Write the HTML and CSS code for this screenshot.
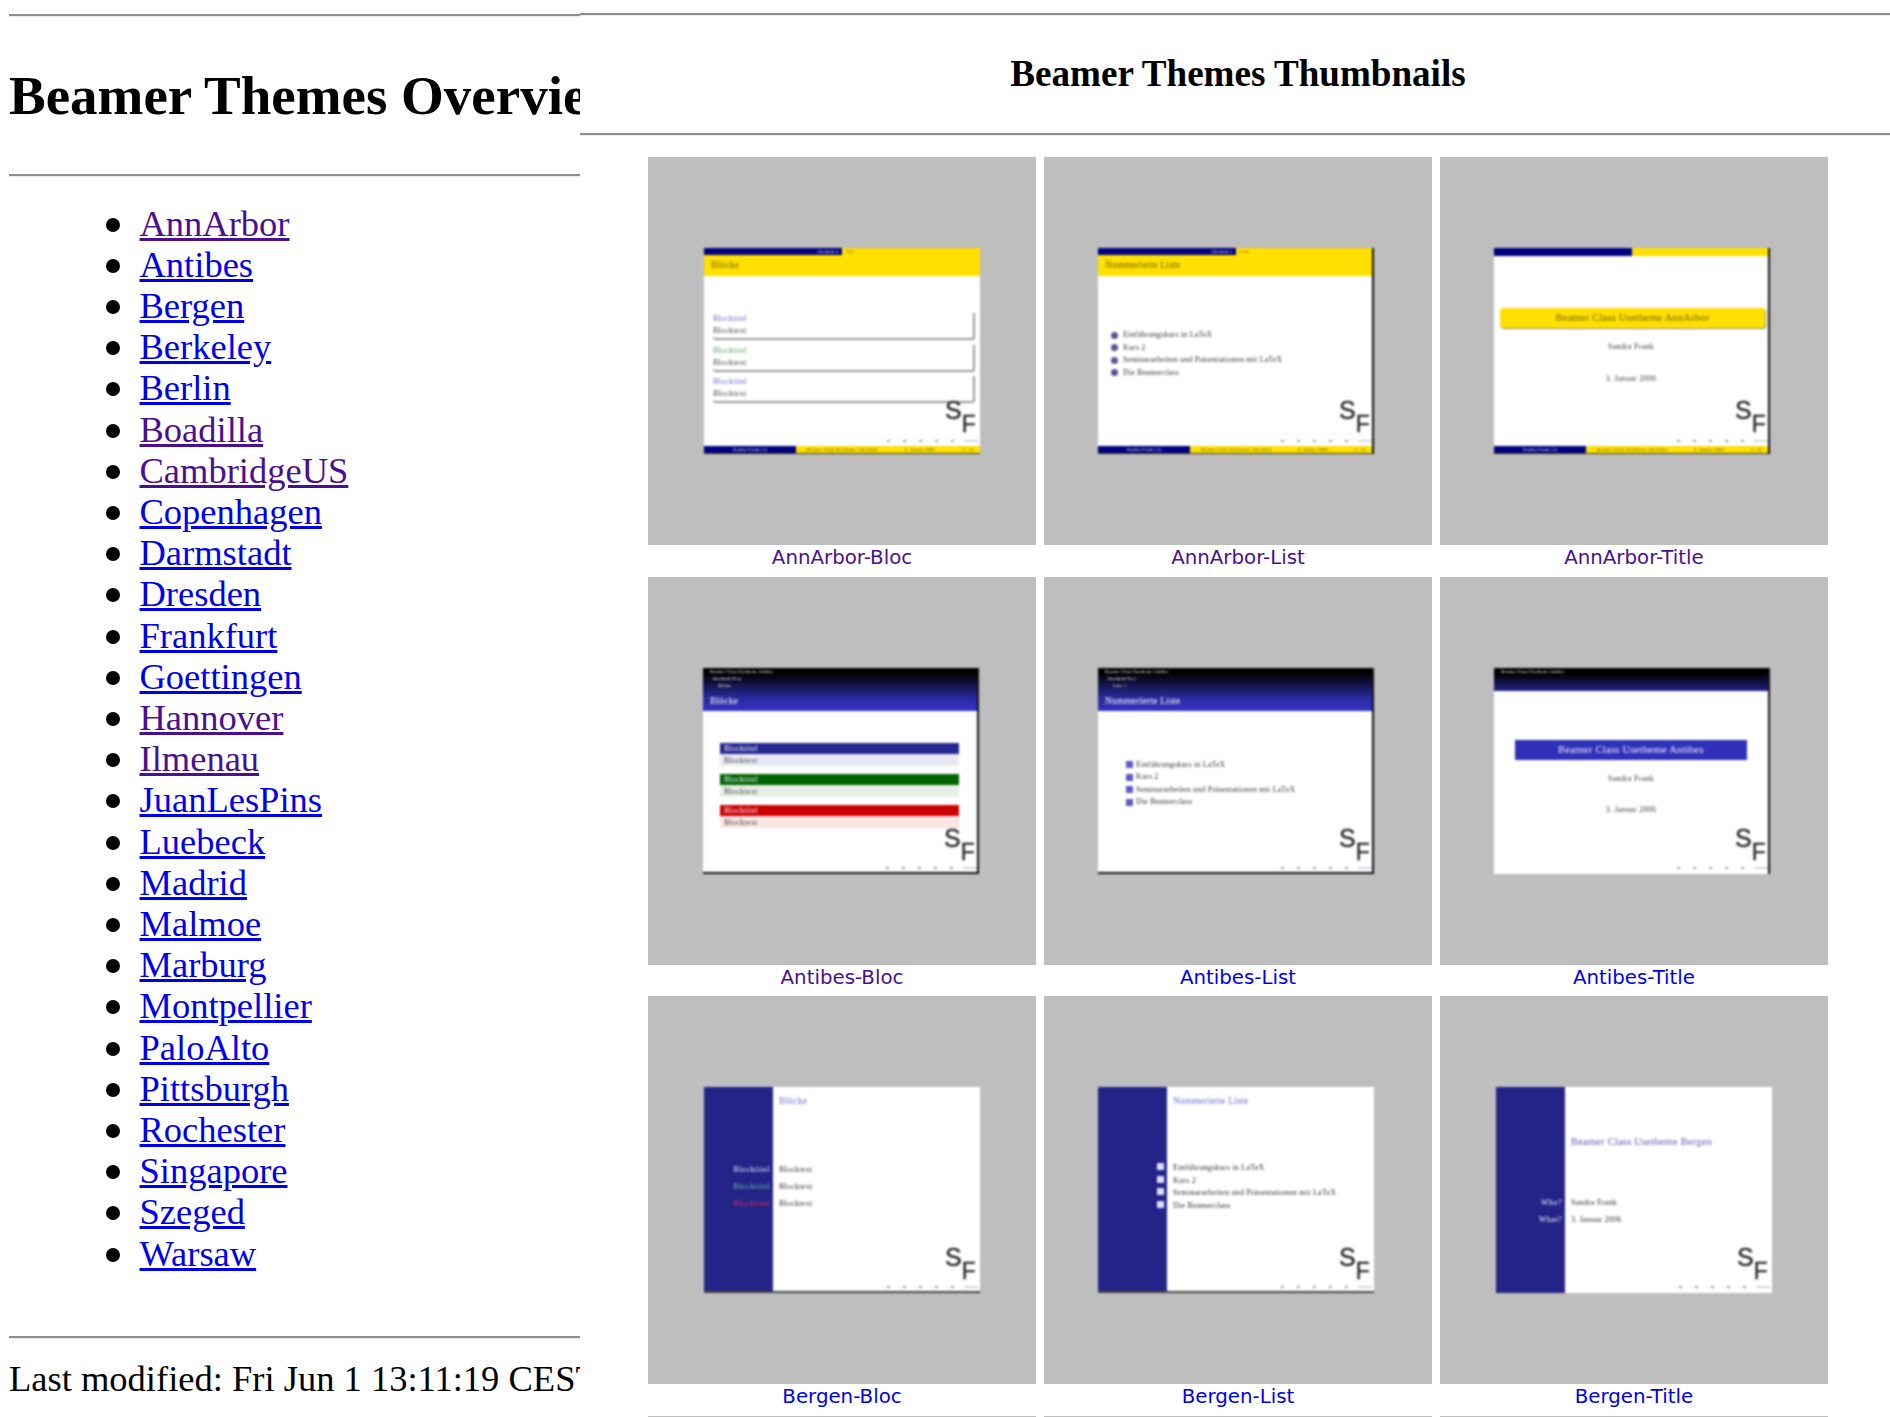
FILE: index.html
```html
<!DOCTYPE html>
<html lang="en">
<head>
    <meta charset="UTF-8">
    <title>Beamer Themes Overview</title>
    <link rel="stylesheet" href="styles.css">
</head>
<body>
    <div class="frames">
        <div class="toc">
            <hr class="rule first-rule">
            <h1>Beamer Themes Overview</h1>
            <hr class="rule">
            <ul class="theme-list">
                <li><a class="seen" href="#">AnnArbor</a></li>
                <li><a href="#">Antibes</a></li>
                <li><a href="#">Bergen</a></li>
                <li><a href="#">Berkeley</a></li>
                <li><a href="#">Berlin</a></li>
                <li><a class="seen" href="#">Boadilla</a></li>
                <li><a class="seen" href="#">CambridgeUS</a></li>
                <li><a href="#">Copenhagen</a></li>
                <li><a href="#">Darmstadt</a></li>
                <li><a href="#">Dresden</a></li>
                <li><a href="#">Frankfurt</a></li>
                <li><a href="#">Goettingen</a></li>
                <li><a class="seen" href="#">Hannover</a></li>
                <li><a class="seen" href="#">Ilmenau</a></li>
                <li><a href="#">JuanLesPins</a></li>
                <li><a href="#">Luebeck</a></li>
                <li><a href="#">Madrid</a></li>
                <li><a href="#">Malmoe</a></li>
                <li><a href="#">Marburg</a></li>
                <li><a href="#">Montpellier</a></li>
                <li><a href="#">PaloAlto</a></li>
                <li><a href="#">Pittsburgh</a></li>
                <li><a href="#">Rochester</a></li>
                <li><a href="#">Singapore</a></li>
                <li><a href="#">Szeged</a></li>
                <li><a href="#">Warsaw</a></li>
            </ul>
            <hr class="rule last-rule">
            <p class="modified">Last modified: Fri Jun 1 13:11:19 CEST 2007</p>
        </div>

        <div class="thumbs">
            <hr class="rule top-rule">
            <h2>Beamer Themes Thumbnails</h2>
            <hr class="rule">
            <div class="grid">

                <!-- AnnArbor -->
                <div class="cell">
                    <div class="shot">
                        <div class="slide">
                            <div class="aa-top">
                                <div class="aa-top-left">Abschnitt 4</div>
                                <div class="aa-top-right">Titel</div>
                            </div>
                            <div class="aa-head">Blöcke</div>
                            <div class="aa-blocks">
                                <div class="aa-block"><div class="tint-blue">Blocktitel</div><div>Blocktext</div></div>
                                <div class="aa-block"><div class="tint-green">Blocktitel</div><div>Blocktext</div></div>
                                <div class="aa-block"><div class="tint-blue">Blocktitel</div><div>Blocktext</div></div>
                            </div>
                            <div class="aa-foot">
                                <div class="aa-foot-left">Sandra Frank (1)</div>
                                <div class="aa-foot-right"><span>Beamer Class Usetheme AnnArbor</span><span>3. Januar 2006</span><span>2 / 12</span></div>
                            </div>
                            <div class="logo">S<span class="logo-f">F</span></div>
                            <div class="nav"><i></i><i></i><i></i><i></i><i></i><b></b></div>
                        </div>
                    </div>
                    <a class="caption seen" href="#">AnnArbor-Bloc</a>
                </div>

                <div class="cell">
                    <div class="shot">
                        <div class="slide slide-shift edge-right">
                            <div class="aa-top">
                                <div class="aa-top-left">Abschnitt 3</div>
                                <div class="aa-top-right">Liste</div>
                            </div>
                            <div class="aa-head">Nummerierte Liste</div>
                            <ul class="items items-aa">
                                <li><span class="ball"></span>Einführungskurs in LaTeX</li>
                                <li><span class="ball"></span>Kurs 2</li>
                                <li><span class="ball"></span>Seminararbeiten und Präsentationen mit LaTeX</li>
                                <li><span class="ball"></span>Die Beamerclass</li>
                            </ul>
                            <div class="aa-foot">
                                <div class="aa-foot-left">Sandra Frank (1)</div>
                                <div class="aa-foot-right"><span>Beamer Class Usetheme AnnArbor</span><span>3. Januar 2006</span><span>3 / 12</span></div>
                            </div>
                            <div class="logo">S<span class="logo-f">F</span></div>
                            <div class="nav"><i></i><i></i><i></i><i></i><i></i><b></b></div>
                        </div>
                    </div>
                    <a class="caption seen" href="#">AnnArbor-List</a>
                </div>

                <div class="cell">
                    <div class="shot">
                        <div class="slide slide-shift edge-right">
                            <div class="aa-top aa-top-plain">
                                <div class="aa-top-left"></div>
                                <div class="aa-top-right"></div>
                            </div>
                            <div class="title-page title-aa">
                                <div class="title-box title-box-aa">Beamer Class Usetheme AnnArbor</div>
                                <div class="title-line">Sandra Frank</div>
                                <div class="title-line title-date">3. Januar 2006</div>
                            </div>
                            <div class="aa-foot">
                                <div class="aa-foot-left">Sandra Frank (1)</div>
                                <div class="aa-foot-right"><span>Beamer Class Usetheme AnnArbor</span><span>3. Januar 2006</span><span>1 / 12</span></div>
                            </div>
                            <div class="logo">S<span class="logo-f">F</span></div>
                            <div class="nav"><i></i><i></i><i></i><i></i><i></i><b></b></div>
                        </div>
                    </div>
                    <a class="caption seen" href="#">AnnArbor-Title</a>
                </div>

                <!-- Antibes -->
                <div class="cell">
                    <div class="shot">
                        <div class="slide slide-nudge edge-right edge-bottom">
                            <div class="an-head">
                                <div class="an-crumb">Beamer Class Usetheme Antibes</div>
                                <div class="an-crumb an-crumb-2">Abschnitt Nr.4</div>
                                <div class="an-crumb an-crumb-3">Blöcke</div>
                                <div class="an-title">Blöcke</div>
                            </div>
                            <div class="an-blocks">
                                <div class="an-block"><div class="an-bar bar-blue">Blocktitel</div><div class="an-body body-blue">Blocktext</div></div>
                                <div class="an-block"><div class="an-bar bar-green">Blocktitel</div><div class="an-body body-green">Blocktext</div></div>
                                <div class="an-block"><div class="an-bar bar-red">Blocktitel</div><div class="an-body body-red">Blocktext</div></div>
                            </div>
                            <div class="logo logo-low">S<span class="logo-f">F</span></div>
                            <div class="nav nav-low"><i></i><i></i><i></i><i></i><i></i><b></b></div>
                        </div>
                    </div>
                    <a class="caption seen" href="#">Antibes-Bloc</a>
                </div>

                <div class="cell">
                    <div class="shot">
                        <div class="slide slide-shift edge-right edge-bottom">
                            <div class="an-head">
                                <div class="an-crumb">Beamer Class Usetheme Antibes</div>
                                <div class="an-crumb an-crumb-2">Abschnitt Nr.3</div>
                                <div class="an-crumb an-crumb-3">Liste 1</div>
                                <div class="an-title">Nummerierte Liste</div>
                            </div>
                            <ul class="items items-an">
                                <li><span class="square"></span>Einführungskurs in LaTeX</li>
                                <li><span class="square"></span>Kurs 2</li>
                                <li><span class="square"></span>Seminararbeiten und Präsentationen mit LaTeX</li>
                                <li><span class="square"></span>Die Beamerclass</li>
                            </ul>
                            <div class="logo logo-low">S<span class="logo-f">F</span></div>
                            <div class="nav nav-low"><i></i><i></i><i></i><i></i><i></i><b></b></div>
                        </div>
                    </div>
                    <a class="caption" href="#">Antibes-List</a>
                </div>

                <div class="cell">
                    <div class="shot">
                        <div class="slide slide-shift edge-right">
                            <div class="an-head an-head-short">
                                <div class="an-crumb">Beamer Class Usetheme Antibes</div>
                            </div>
                            <div class="title-page title-an">
                                <div class="title-box title-box-an">Beamer Class Usetheme Antibes</div>
                                <div class="title-line">Sandra Frank</div>
                                <div class="title-line title-date">3. Januar 2006</div>
                            </div>
                            <div class="logo logo-low">S<span class="logo-f">F</span></div>
                            <div class="nav nav-low"><i></i><i></i><i></i><i></i><i></i><b></b></div>
                        </div>
                    </div>
                    <a class="caption" href="#">Antibes-Title</a>
                </div>

                <!-- Bergen -->
                <div class="cell">
                    <div class="shot">
                        <div class="slide slide-side edge-bottom-soft">
                            <div class="side"></div>
                            <div class="side-main">
                                <div class="side-head">Blöcke</div>
                                <div class="side-rows side-rows-bloc">
                                    <div class="side-row"><span class="side-label">Blocktitel</span><span>Blocktext</span></div>
                                    <div class="side-row"><span class="side-label label-teal">Blocktitel</span><span>Blocktext</span></div>
                                    <div class="side-row"><span class="side-label label-red">Blocktitel</span><span>Blocktext</span></div>
                                </div>
                            </div>
                            <div class="logo logo-low">S<span class="logo-f">F</span></div>
                            <div class="nav nav-low"><i></i><i></i><i></i><i></i><i></i><b></b></div>
                        </div>
                    </div>
                    <a class="caption" href="#">Bergen-Bloc</a>
                </div>

                <div class="cell">
                    <div class="shot">
                        <div class="slide slide-shift slide-side edge-bottom-soft">
                            <div class="side"></div>
                            <div class="side-main">
                                <div class="side-head">Nummerierte Liste</div>
                                <div class="side-rows side-rows-list">
                                    <div class="side-row"><span class="side-label"><span class="side-num"></span></span><span>Einführungskurs in LaTeX</span></div>
                                    <div class="side-row"><span class="side-label"><span class="side-num"></span></span><span>Kurs 2</span></div>
                                    <div class="side-row"><span class="side-label"><span class="side-num"></span></span><span>Seminararbeiten und Präsentationen mit LaTeX</span></div>
                                    <div class="side-row"><span class="side-label"><span class="side-num"></span></span><span>Die Beamerclass</span></div>
                                </div>
                            </div>
                            <div class="logo logo-low">S<span class="logo-f">F</span></div>
                            <div class="nav nav-low"><i></i><i></i><i></i><i></i><i></i><b></b></div>
                        </div>
                    </div>
                    <a class="caption" href="#">Bergen-List</a>
                </div>

                <div class="cell">
                    <div class="shot">
                        <div class="slide slide-side">
                            <div class="side"></div>
                            <div class="side-main">
                                <div class="side-title">Beamer Class Usetheme Bergen</div>
                                <div class="side-rows side-rows-title">
                                    <div class="side-row"><span class="side-label">Who?</span><span>Sandra Frank</span></div>
                                    <div class="side-row"><span class="side-label">What?</span><span>3. Januar 2006</span></div>
                                </div>
                            </div>
                            <div class="logo logo-low">S<span class="logo-f">F</span></div>
                            <div class="nav nav-low"><i></i><i></i><i></i><i></i><i></i><b></b></div>
                        </div>
                    </div>
                    <a class="caption" href="#">Bergen-Title</a>
                </div>

                <!-- next row, only its top edge is on screen -->
                <div class="cell"><div class="shot"></div></div>
                <div class="cell"><div class="shot"></div></div>
                <div class="cell"><div class="shot"></div></div>
            </div>
        </div>
    </div>
</body>
</html>
```

FILE: styles.css
```css
html, body {
    margin: 0;
    height: 100%;
    overflow: hidden;
    background: white;
}
.frames {
    display: flex;
    height: 1417px;
    overflow: hidden;
    font-family: "Liberation Serif", serif;
    color: black;
}
.rule {
    margin: 0;
    border: 0;
    border-top: 2px solid #8e8e8e;
    border-bottom: 1px solid #ececec;
}

/* left frame */
.toc {
    width: 571px;
    padding-left: 9px;
    flex: none;
    overflow: hidden;
    white-space: nowrap;
}
.first-rule {
    margin-top: 14px;
}
h1 {
    margin: 0;
    padding: 48px 0 47px;
    font-size: 55px;
    line-height: 62px;
}
.theme-list {
    margin: 0;
    padding: 25.5px 0 0 130.5px;
    list-style: none;
    font-size: 36.5px;
    line-height: 41.2px;
}
.theme-list li::before {
    content: "";
    display: inline-block;
    width: 14px;
    height: 14px;
    margin: 0 19.5px 0 -33.5px;
    border-radius: 50%;
    background: black;
    vertical-align: 4px;
}
a {
    color: #0000f0;
}
a.seen {
    color: #4a1090;
}
.last-rule {
    margin-top: 62.5px;
}
.modified {
    margin: 0;
    padding-top: 19px;
    font-size: 36.5px;
    line-height: 41px;
}

/* right frame */
.thumbs {
    flex: 1;
    min-width: 0;
}
.top-rule {
    margin-top: 13px;
}
h2 {
    margin: 0;
    padding: 32px 0 33px 6px;
    font-size: 37.1px;
    line-height: 52px;
    text-align: center;
}
.grid {
    display: grid;
    grid-template-columns: repeat(3, 388px);
    gap: 0 8px;
    padding: 21px 0 0 68px;
}
.cell {
    height: 420px;
    text-align: center;
}
.cell:nth-child(n+4):nth-child(-n+6) {
    height: 419px;
}
.shot {
    height: 388px;
    background: #bebebe;
    display: flex;
    justify-content: center;
    align-items: center;
}
.caption {
    display: block;
    font-family: "DejaVu Sans", sans-serif;
    font-size: 19.8px;
    line-height: 26px;
    text-decoration: none;
}

/* one slide thumbnail */
.slide {
    position: relative;
    width: 276px;
    height: 206px;
    flex: none;
    box-sizing: border-box;
    display: flex;
    flex-direction: column;
    overflow: hidden;
    background: white;
    color: #333;
    font-size: 8px;
    line-height: 10px;
    letter-spacing: .25px;
    text-align: left;
    filter: blur(.85px);
}
.slide-shift {
    margin-left: -4px;
}
.slide-nudge {
    margin-left: -2px;
}
.edge-right {
    border-right: 2px solid #111;
}
.edge-bottom {
    border-bottom: 2px solid #111;
}
.edge-bottom-soft {
    border-bottom: 2px solid #444;
}
.logo {
    position: absolute;
    left: 241px;
    top: 150px;
    font-family: "Liberation Sans", sans-serif;
    font-size: 25px;
    line-height: 25px;
    letter-spacing: 0;
    color: #222;
    -webkit-text-stroke: .3px #222;
}
.logo-f {
    font-size: 23px;
    vertical-align: -13px;
}
.logo-low {
    top: 158px;
}
.nav {
    position: absolute;
    left: 183px;
    top: 192px;
    display: flex;
    align-items: center;
    gap: 13px;
}
.nav-low {
    top: 199px;
}
.nav i {
    width: 3px;
    height: 2px;
    background: #a0a0a0;
}
.nav b {
    width: 14px;
    height: 2px;
    margin-left: -3px;
    background: #d6d6e0;
}

/* AnnArbor */
.aa-top {
    display: flex;
    height: 7px;
    font-size: 4px;
    line-height: 7px;
    flex: none;
}
.aa-top-left {
    width: 138px;
    padding-right: 4px;
    box-sizing: border-box;
    background: #000080;
    color: white;
    text-align: right;
}
.aa-top-right {
    flex: 1;
    padding-left: 4px;
    background: #ffe000;
    color: #5b5000;
}
.aa-top-plain {
    height: 8px;
}
.aa-head {
    height: 21px;
    flex: none;
    padding: 0 7px;
    box-sizing: border-box;
    background: #ffe000;
    color: #6d6300;
    font-size: 9.4px;
    line-height: 20px;
}
.aa-blocks {
    flex: 1;
    padding: 37px 5px 0 9px;
    display: flex;
    flex-direction: column;
    gap: 4.5px;
}
.aa-block {
    height: 25px;
    border-right: 2px solid #999;
    border-bottom: 2px solid #999;
    border-radius: 0 0 3px 3px;
    line-height: 12px;
    color: #444;
}
.tint-blue {
    color: #6a6ac8;
}
.tint-green {
    color: #5f9e5f;
}
.aa-foot {
    display: flex;
    height: 8px;
    flex: none;
    font-size: 4.5px;
    line-height: 8px;
    border-bottom: 1px solid #3a3a20;
    box-sizing: border-box;
}
.aa-foot-left {
    width: 92px;
    flex: none;
    background: #000080;
    color: white;
    text-align: center;
}
.aa-foot-right {
    flex: 1;
    display: flex;
    justify-content: space-between;
    padding: 0 6px 0 11px;
    background: #ffe000;
    color: #4b4000;
}
.items {
    flex: 1;
    margin: 0;
    list-style: none;
    display: flex;
    flex-direction: column;
    justify-content: center;
    font-size: 7.8px;
    line-height: 12.5px;
    color: #333;
}
.items li {
    display: flex;
    align-items: center;
}
.items-aa {
    padding: 0 0 14px 13px;
}
.items-an {
    padding: 0 0 16px 28px;
}
.ball {
    width: 7px;
    height: 7px;
    margin-right: 5px;
    border-radius: 50%;
    background: #55558f;
}
.square {
    width: 7px;
    height: 7px;
    margin-right: 3px;
    background: #5a5ac0;
}

/* title pages */
.title-page {
    flex: 1;
    display: flex;
    flex-direction: column;
    align-items: center;
    font-size: 8px;
    color: #444;
}
.title-box {
    height: 20px;
    line-height: 20px;
    text-align: center;
    box-sizing: border-box;
}
.title-aa {
    padding-top: 52px;
}
.title-box-aa {
    width: 265px;
    margin-left: 3px;
    background: #ffe000;
    color: #6d6300;
    font-size: 10.4px;
    border-radius: 3px;
    box-shadow: 1px 1px 1px #8c8c60;
}
.title-line {
    margin-top: 14px;
    line-height: 10px;
}
.title-date {
    margin-top: 22px;
}
.title-an {
    padding-top: 49px;
}
.title-an .title-date {
    margin-top: 21px;
}
.title-box-an {
    width: 232px;
    background: #3030b8;
    color: #f0f0ff;
    font-size: 10.6px;
}

/* Antibes */
.an-head {
    height: 43px;
    flex: none;
    background: linear-gradient(#000 0, #000 5px, #2a2a9e 30px, #3434c4 43px);
    color: white;
    font-size: 4.3px;
    line-height: 7px;
}
.an-head-short {
    height: 23px;
    background: linear-gradient(#000 0, #000 6px, #22228c 23px);
}
.an-crumb {
    padding-left: 7px;
}
.an-crumb-2 {
    padding-left: 9px;
}
.an-crumb-3 {
    padding-left: 15px;
}
.an-title {
    padding: 4px 0 0 7px;
    font-size: 9.4px;
    line-height: 16px;
}
.an-blocks {
    flex: 1;
    padding: 32px 18px 0 17px;
    display: flex;
    flex-direction: column;
    gap: 8px;
}
.an-bar {
    height: 11px;
    padding-left: 4px;
    color: #f0f0ff;
    line-height: 11px;
}
.an-body {
    height: 12px;
    padding-left: 4px;
    color: #444;
    line-height: 13px;
}
.bar-blue {
    background: #262690;
}
.bar-green {
    background: #006400;
}
.bar-red {
    background: #cc0000;
}
.body-blue {
    background: #e8e8f2;
}
.body-green {
    background: #e6efe6;
}
.body-red {
    background: #fae4e4;
}

/* Bergen */
.slide-side {
    flex-direction: row;
}
.side {
    position: absolute;
    left: 0;
    top: 0;
    bottom: 0;
    width: 69px;
    background: #232388;
}
.side-main {
    position: relative;
    flex: 1;
    display: flex;
    flex-direction: column;
}
.side-head {
    padding: 8px 0 0 75px;
    color: #6a6acc;
    font-size: 9.4px;
    line-height: 12px;
}
.side-title {
    padding: 49px 0 0 75px;
    color: #5a5ab4;
    font-size: 10.4px;
    line-height: 12px;
}
.side-rows {
    color: #333;
}
.side-rows-bloc {
    padding-top: 57px;
}
.side-rows-list {
    padding-top: 55px;
}
.side-rows-title {
    padding-top: 49px;
}
.side-row {
    display: flex;
    height: 17px;
    line-height: 12px;
}
.side-rows-list .side-row {
    height: 12.5px;
}
.side-label {
    width: 66px;
    margin-right: 9px;
    flex: none;
    text-align: right;
    letter-spacing: .5px;
    color: #f0f0ff;
}
.label-teal {
    color: #70c0a8;
}
.label-red {
    color: #e83060;
}
.side-num {
    display: inline-block;
    width: 7px;
    height: 7px;
    background: #e0e0ff;
}
```
